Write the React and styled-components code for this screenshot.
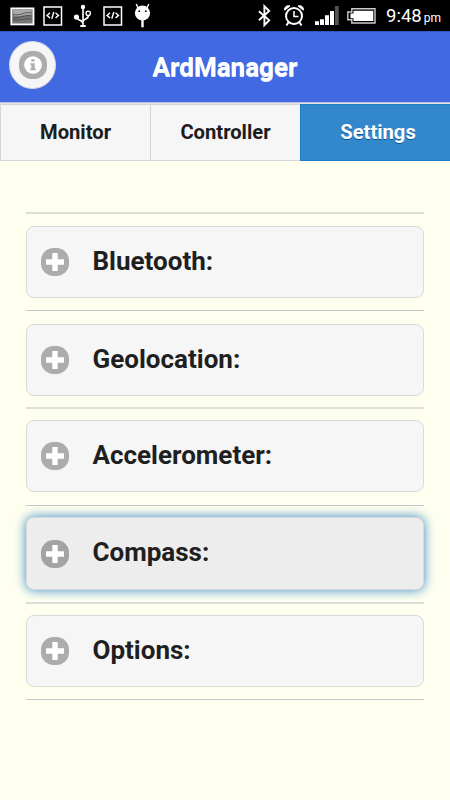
import React from 'react'
import styled, { createGlobalStyle } from 'styled-components'

const sections = [
    { name: 'Bluetooth:', margin: '0', rule: 1 },
    { name: 'Geolocation:', margin: '1px 0 -1px', rule: 2 },
    { name: 'Accelerometer:', margin: '-1px 0 1px', rule: 1 },
    { name: 'Compass:', margin: '-1px 0 0', rule: 2, active: true },
    { name: 'Options:', margin: '-1px 0 0', rule: 1 },
]

function CodeIcon() {
    return (
        <svg width="20" height="20" viewBox="0 0 20 20" fill="none" stroke="#fff">
            <rect x="1" y="1" width="17.5" height="18" strokeWidth="1.5" />
            <path d="M7 6.8L4 9.4L7 12M12.5 6.8L15.5 9.4L12.5 12M10.8 6L8.8 12.8" strokeWidth="1.4" />
        </svg>
    )
}

function StatusBar() {
    return (
        <Status>
            <Tray>
                <svg width="25" height="20" viewBox="0 0 25 20">
                    <rect x="1.3" y="2.4" width="22.2" height="16" fill="#777" stroke="#fff" strokeWidth="1.8" />
                    <path d="M3 4H21.5V9C16 8 10 12 3 9Z" fill="#aaa" />
                    <path d="M3 8C10 11 14 5 21.5 7M3 12C9 13 15 8 21.5 10M3 14C9 15 16 12 21.5 13" fill="none" stroke="#444" strokeWidth=".8" />
                </svg>
                <CodeIcon />
                <svg width="19" height="24" viewBox="0 0 19 24" fill="none" stroke="#fff" strokeWidth="1.6">
                    <path d="M10 3V22M3.5 13C3.5 17 10 15 10 20M15.5 11C16 16 10 14 10 18" />
                    <circle cx="10" cy="3" r="2.2" fill="#fff" stroke="none" />
                    <circle cx="3.5" cy="13" r="2.6" fill="#fff" stroke="none" />
                    <circle cx="15.2" cy="9.3" r="2.2" strokeWidth="1.4" />
                    <path d="M7.3 22H12.7" strokeWidth="2" />
                </svg>
                <CodeIcon />
                <svg width="17" height="25" viewBox="0 0 17 25">
                    <path d="M4 5L2.2 1M13 5L14.8 1" stroke="#fff" strokeWidth="1.4" />
                    <ellipse cx="8.5" cy="10" rx="7.6" ry="7.6" fill="#fff" />
                    <circle cx="5.2" cy="8.2" r=".9" />
                    <circle cx="11.8" cy="8.2" r=".9" />
                    <path d="M8.5 16V24.3" stroke="#fff" strokeWidth="2.4" />
                </svg>
            </Tray>
            <System>
                <svg width="13" height="24" viewBox="0 0 13 24" fill="none" stroke="#fff" strokeWidth="1.9">
                    <path d="M.9 7.3L11.2 16.2L6.4 21.2V2.2L11.2 7L.9 16.3" />
                </svg>
                <svg width="22" height="23" viewBox="0 0 22 23" fill="none" stroke="#fff">
                    <circle cx="11" cy="12" r="8" strokeWidth="2" />
                    <path d="M11 7V12.6H15.5" strokeWidth="1.5" />
                    <path d="M1.7 6.2C1 3 4 1 7 2ZM20.3 6.2C21 3 18 1 15 2Z" fill="#fff" strokeWidth="1" />
                    <path d="M5.7 18L3.5 21.5M16.3 18L18.5 21.5" strokeWidth="2" />
                </svg>
                <svg width="24" height="20" viewBox="0 0 24 20" fill="#fff">
                    <path d="M0 15.3H4V19H0ZM5 13.3H9V19H5ZM10 9.3H14V19H10ZM15 5H19V19H15Z" />
                    <path d="M20 0H23.7V19H20Z" fill="#555" />
                </svg>
                <svg width="29" height="16" viewBox="0 0 29 16">
                    <path d="M4.8 .8H28V15H4.8V11.8H.8V4H4.8Z" fill="none" stroke="#ccc" strokeWidth="1.4" />
                    <path d="M6.5 2.8H26.3V13H6.5V10.2H3.5V5.6H6.5Z" fill="#fff" />
                </svg>
                <Clock>9:48<small>pm</small></Clock>
            </System>
        </Status>
    )
}

function PlusIcon({ active }) {
    return (
        <svg width="28" height="28" viewBox="0 0 28 28">
            <rect width="28" height="28" rx="12.5" fill={active ? '#a3a3a3' : '#acacac'} />
            <path d="M14 5V23M5 14H23" stroke="#fff" strokeWidth="5.4" />
        </svg>
    )
}

function App() {
    return (
        <Page>
            <GlobalStyle />
            <StatusBar />
            <Header>
                <InfoButton>
                    <svg width="28" height="28" viewBox="0 0 28 28">
                        <rect width="28" height="28" rx="12.5" fill="#acacac" />
                        <circle cx="14" cy="14" r="8.8" fill="#fff" />
                        <path d="M12.3 8.2H15.5V10.5H12.3ZM11.2 12.2H15.7V17.5H16.8V19.3H11.2V17.5H12.3V13.7H11.2Z" fill="#acacac" />
                    </svg>
                </InfoButton>
                <Title>ArdManager</Title>
            </Header>
            <Tabs>
                <Tab>Monitor</Tab>
                <Tab>Controller</Tab>
                <Tab $active>Settings</Tab>
            </Tabs>
            <List>
                <Divider $size={2} />
                {sections.map(section => (
                    <React.Fragment key={section.name}>
                        <Panel $active={section.active} $margin={section.margin}>
                            <PlusIcon active={section.active} />
                            <h2>{section.name}</h2>
                        </Panel>
                        <Divider $size={section.rule} />
                    </React.Fragment>
                ))}
            </List>
        </Page>
    )
}

const GlobalStyle = createGlobalStyle`
    * {
        box-sizing:border-box;
    }
    body {
        margin:0;
        background-color:#ffffef;
        font-family:Roboto, 'Liberation Sans', sans-serif;
    }
    svg {
        display:block;
        flex-shrink:0;
    }
`

const Page = styled.div`
    width:450px;
    height:800px;
    overflow:hidden;
    background-color:#ffffef;
`

const Status = styled.div`
    height:31px;
    display:flex;
    justify-content:space-between;
    background-color:#000;
    color:#fff;
`

const Tray = styled.div`
    display:flex;
    align-items:center;
    gap:8px;
    padding-left:10px;

    svg:nth-child(3) {
        margin:0 3px 0 2px;
    }
    svg:nth-child(5) {
        margin-left:3px;
    }
`

const System = styled.div`
    display:flex;
    align-items:center;
    padding-right:10px;

    svg:nth-child(1) {
        margin-right:12px;
    }
    svg:nth-child(2) {
        margin-right:10px;
    }
    svg:nth-child(3) {
        margin:1px 8px 0 0;
    }
`

const Clock = styled.div`
    margin:2px 0 0 10px;
    width:54px;
    font-size:18.5px;
    line-height:24px;
    white-space:nowrap;

    small {
        margin-left:2px;
        font-size:12px;
    }
`

const Header = styled.header`
    display:grid;
    grid-template-columns:48px 1fr 48px;
    align-items:center;
    height:72px;
    padding:0 9px 4px;
    background-color:#4169e1;
    border-top:1px solid #3258bd;
    border-bottom:1px solid #b9c0dc;
`

const InfoButton = styled.button`
    display:flex;
    align-items:center;
    justify-content:center;
    width:47px;
    height:48px;
    padding:0;
    border:1px solid #d5d9e6;
    border-radius:50%;
    background-color:#f6f6f6;
`

const Title = styled.h1`
    margin:4px 0 0;
    color:#fff;
    font-size:26px;
    line-height:32px;
    font-weight:700;
    text-align:center;
    text-shadow:0 1px 0 #e8edff;
`

const Tabs = styled.nav`
    display:grid;
    grid-template-columns:repeat(3, 1fr);
    height:58px;
    border-top:1px solid #e2e2e6;
`

const Tab = styled.div`
    display:flex;
    align-items:center;
    justify-content:center;
    padding:0 0 1px ${props => props.$active ? '5px' : '0'};
    border:1px solid ${props => props.$active ? '#1c7fc6' : '#d5d5d5'};
    border-right-width:0;
    background-color:${props => props.$active ? '#3388cc' : '#f6f6f6'};
    color:${props => props.$active ? '#fff' : '#1c1c1c'};
    font-size:20.2px;
    font-weight:700;
    text-shadow:${props => props.$active ? '0 1px 0 #005599' : '0 1px 0 #f3f3f3'};
`

const List = styled.main`
    display:flex;
    flex-direction:column;
    gap:12px;
    padding:51px 26px 0;
`

const Divider = styled.div`
    height:${props => props.$size}px;
    background-color:${props => props.$size === 2 ? '#deded8' : '#c8c8ca'};
`

const Panel = styled.section`
    display:flex;
    align-items:center;
    gap:23.5px;
    height:${props => props.$active ? '73px' : '72px'};
    margin:${props => props.$margin};
    padding-left:14px;
    border:1px solid #d9d9d9;
    border-radius:8px;
    background-color:${props => props.$active ? '#ededed' : '#f6f6f6'};
    box-shadow:${props => props.$active ? '0 0 12px #3388cc' : 'none'};

    h2 {
        margin:0 0 3px;
        color:#1f1f1f;
        font-size:26px;
        line-height:32px;
        font-weight:700;
    }
`

export default App
